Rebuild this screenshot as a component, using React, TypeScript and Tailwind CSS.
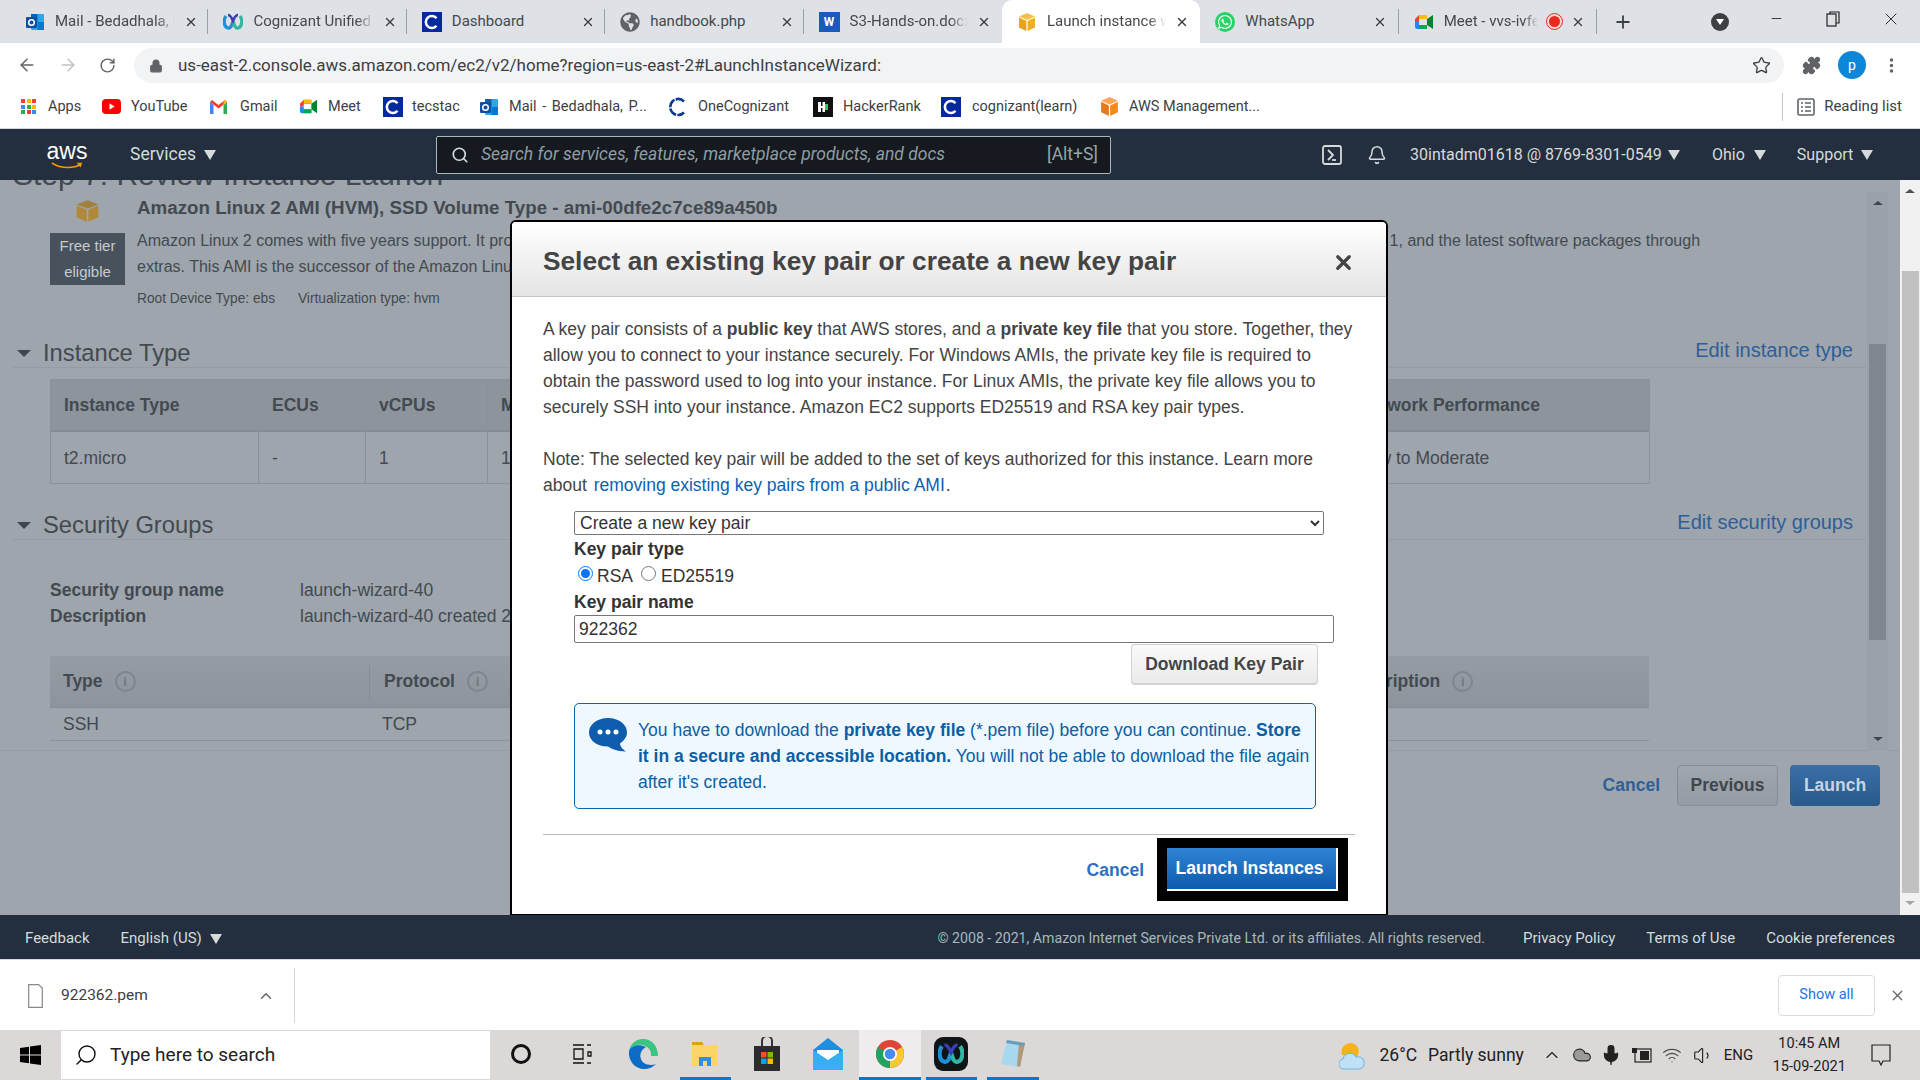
import type { ReactNode } from 'react';
import {
  ArrowLeft, ArrowRight, Bell, ChevronUp, EllipsisVertical, Lock, Mic, Minus, Plus, RotateCw,
  Search, Star, Volume1, X, Puzzle, Wifi, Cloud,
} from 'lucide-react';
import { FaGlobeAmericas, FaWhatsapp } from 'react-icons/fa';

const chromeFont = "font-['Roboto',sans-serif]";

function Outlook({ size = 20 }: { size?: number }) {
  return (
    <svg width={size} height={size} viewBox="0 0 20 20" className="shrink-0">
      <rect x="6" y="2" width="13" height="16" rx="1" fill="#28a8ea" />
      <rect x="6" y="2" width="6.5" height="8" fill="#0364b8" />
      <rect x="12.5" y="10" width="6.5" height="8" fill="#0078d4" />
      <rect x="1" y="5" width="11" height="11" rx="1" fill="#0f4f9e" />
      <circle cx="6.5" cy="10.5" r="2.8" fill="none" stroke="#fff" strokeWidth="1.5" />
    </svg>
  );
}

function CLogo({ size = 20 }: { size?: number }) {
  return (
    <svg width={size} height={size} viewBox="0 0 20 20" className="shrink-0">
      <rect width="20" height="20" fill="#03299b" />
      <path d="M14.5 6.2A6 6 0 1 0 14.5 13.8" fill="none" stroke="#fff" strokeWidth="2.6" />
    </svg>
  );
}

function Webex({ size = 20 }: { size?: number }) {
  return (
    <svg width={size} height={size} viewBox="0 0 20 20" className="shrink-0">
      <path d="M3 4c-3 4-2 11 2 12 3 1 4-4 5-7" fill="none" stroke="#1f8fd6" strokeWidth="3.2" />
      <path d="M17 4c3 4 2 11-2 12-3 1-4-4-5-7" fill="none" stroke="#2fb8a0" strokeWidth="3.2" />
      <path d="M5 3c3 0 4 4 5 6 1-2 2-6 5-6" fill="none" stroke="#3c3fb8" strokeWidth="2.6" />
    </svg>
  );
}

function MeetIcon({ size = 20 }: { size?: number }) {
  return (
    <svg width={size} height={size} viewBox="0 0 20 20" className="shrink-0">
      <path d="M5 3h8v4H5v3H1V7z" fill="#ea4335" />
      <path d="M1 10h4v3h8v4H3a2 2 0 0 1-2-2z" fill="#2684fc" />
      <path d="M13 7v6l6 4V3z" fill="#00832d" />
      <path d="M5 3h8v4H5z" fill="#fbbc04" />
      <path d="M5 13h8v4H5z" fill="#00ac47" />
    </svg>
  );
}

function Cube({ size = 20, top, left, right }: { size?: number; top: string; left: string; right: string }) {
  return (
    <svg width={size} height={size} viewBox="0 0 20 20" className="shrink-0">
      <path d="M10 1l8 3.5L10 8 2 4.5z" fill={top} />
      <path d="M2 5.5L9.4 9v10L2 15.5z" fill={left} />
      <path d="M18 5.5L10.6 9v10l7.4-3.5z" fill={right} />
    </svg>
  );
}

function Tab({ icon, label, fade, active, noDivider, extra, closeMargin = 'mr-[11px]' }: {
  icon: ReactNode; label: string; fade?: boolean; active?: boolean; noDivider?: boolean; extra?: ReactNode; closeMargin?: string;
}) {
  return (
    <div className={`w-[198.4px] h-full shrink-0 flex items-center pl-[15px] ${active ? 'bg-white rounded-t-[10px]' : ''}`}>
      {icon}
      <span className={`ml-[10px] flex-1 min-w-0 overflow-hidden whitespace-nowrap text-[15px] text-[#45484d] ${fade ? '[mask-image:linear-gradient(to_right,black_85%,transparent)]' : ''}`}>
        {label}
      </span>
      {extra}
      <X size={14} strokeWidth={2.4} className={`ml-[9px] shrink-0 text-[#3c4043] ${closeMargin}`} />
      {!noDivider && !active && <span className="h-[25px] w-px bg-[#9aa0a6] shrink-0" />}
    </div>
  );
}

function TabStrip() {
  return (
    <div className={`h-[43px] bg-[#dee1e6] flex items-center pl-[10px] ${chromeFont}`}>
      <Tab icon={<Outlook />} label="Mail - Bedadhala, Prasanna" fade closeMargin="mr-[9px]" />
      <Tab icon={<Webex />} label="Cognizant Unified Portal" fade closeMargin="mr-[9px]" />
      <Tab icon={<CLogo />} label="Dashboard" closeMargin="mr-[9px]" />
      <Tab icon={<FaGlobeAmericas size={20} className="shrink-0 text-[#5f6368]" />} label="handbook.php" closeMargin="mr-[9px]" />
      <Tab
        icon={<span className="w-[21px] h-[20px] shrink-0 bg-[#185abd] text-white text-[12px] font-bold flex items-center justify-center">W</span>}
        label="S3-Hands-on.docx"
        fade
        noDivider
      />
      <Tab icon={<Cube top="#f7c04a" left="#e8a317" right="#f0ae2a" />} label="Launch instance wizard" fade active noDivider />
      <Tab
        icon={
          <span className="w-[20px] h-[20px] shrink-0 rounded-full bg-[#25d366] flex items-center justify-center text-white">
            <FaWhatsapp size={16} />
          </span>
        }
        label="WhatsApp"
      />
      <Tab
        icon={<MeetIcon />}
        label="Meet - vvs-ivfe-xyz"
        fade
        extra={<span className="w-[15px] h-[15px] ml-[9px] shrink-0 rounded-full bg-[#ea2a1e] border-2 border-[#fbd5d2] outline outline-1 outline-[#ea2a1e]" />}
      />
      <Plus size={20} strokeWidth={2.2} className="ml-[16px] text-[#3c4043]" />
      <span className="ml-[78px] w-[18px] h-[18px] rounded-full bg-[#3c4043] flex items-center justify-center">
        <span className="w-0 h-0 border-l-[4px] border-r-[4px] border-t-[6px] border-l-transparent border-r-transparent border-t-white" />
      </span>
      <Minus size={15} strokeWidth={1.4} className="ml-[40px] -mt-[6px] text-[#222]" />
      <svg width="14" height="16" viewBox="0 0 14 16" className="ml-[42px] -mt-[6px] text-[#222]">
        <rect x="1" y="3" width="9" height="12" fill="none" stroke="currentColor" strokeWidth="1.2" />
        <path d="M4 3V1h9v11h-3" fill="none" stroke="currentColor" strokeWidth="1.2" />
      </svg>
      <X size={20} strokeWidth={1.1} className="ml-[41px] -mt-[6px] text-[#222]" />
    </div>
  );
}

function AddressBar() {
  return (
    <div className={`h-[42px] bg-white flex items-start pt-[5px] ${chromeFont}`}>
      <ArrowLeft size={20} strokeWidth={1.8} className="ml-[17px] mt-[7px] text-[#5f6368]" />
      <ArrowRight size={20} strokeWidth={1.8} className="ml-[21px] mt-[7px] text-[#bdc1c6]" />
      <RotateCw size={17} strokeWidth={2} className="ml-[21px] mt-[9px] text-[#5f6368]" />
      <div className="ml-[18px] w-[1650px] h-[35px] rounded-full bg-[#f1f3f4] flex items-center pl-[15px]">
        <Lock size={14} fill="#5f6368" className="text-[#5f6368]" />
        <span className="ml-[15px] text-[17px] text-[#3c4043] whitespace-nowrap">
          us-east-2.console.aws.amazon.com/ec2/v2/home?region=us-east-2#LaunchInstanceWizard:
        </span>
        <Star size={19} strokeWidth={1.7} className="ml-auto mr-[13px] text-[#3c4043]" />
      </div>
      <Puzzle size={19} fill="#5f6368" className="ml-[18px] mt-[8px] text-[#5f6368]" />
      <span className="ml-[17px] mt-[3px] w-[28px] h-[28px] rounded-full bg-[#0d87d8] text-white text-[14px] flex items-center justify-center">p</span>
      <EllipsisVertical size={19} strokeWidth={2.4} className="ml-[16px] mt-[8px] text-[#5f6368]" />
    </div>
  );
}

function AppsIcon() {
  const colors = ['#ea4335', '#fbbc04', '#ea4335', '#4285f4', '#34a853', '#fbbc04', '#34a853', '#ea4335', '#4285f4'];
  return (
    <span className="grid grid-cols-3 gap-[1.5px] w-[15px] shrink-0">
      {colors.map((c, i) => (
        <span key={i} className="w-[4px] h-[4px]" style={{ background: c }} />
      ))}
    </span>
  );
}

const bookmarks: { w: string; gap: string; label: string; icon: ReactNode }[] = [
  { w: 'w-[81px]', gap: 'ml-[12px]', label: 'Apps', icon: <AppsIcon /> },
  {
    w: 'w-[108px]', gap: 'ml-[10px]', label: 'YouTube',
    icon: (
      <svg width="19" height="15" viewBox="0 0 19 15" className="shrink-0">
        <rect width="19" height="15" rx="4" fill="#f00" />
        <path d="M7.5 4.2l5 3.3-5 3.3z" fill="#fff" />
      </svg>
    ),
  },
  {
    w: 'w-[89px]', gap: 'ml-[13px]', label: 'Gmail',
    icon: (
      <svg width="17" height="14" viewBox="0 0 17 14" className="shrink-0">
        <path d="M0 2v12h3.500V5z" fill="#4285f4" />
        <path d="M17 2v12h-3.500V5z" fill="#34a853" />
        <path d="M0 2l8.500 6.500L17 2l-2-2-6.500 5L2 0z" fill="#ea4335" />
        <path d="M13.500 5V2L15 0l2 2z" fill="#fbbc04" />
      </svg>
    ),
  },
  { w: 'w-[84px]', gap: 'ml-[10px]', label: 'Meet', icon: <MeetIcon size={19} /> },
  { w: 'w-[96px]', gap: 'ml-[9px]', label: 'tecstac', icon: <CLogo /> },
  { w: 'w-[189px]', gap: 'ml-[10px] [word-spacing:2px]', label: 'Mail - Bedadhala, P...', icon: <Outlook /> },
  {
    w: 'w-[145px]', gap: 'ml-[10px]', label: 'OneCognizant',
    icon: (
      <svg width="20" height="20" viewBox="0 0 20 20" className="shrink-0">
        <path d="M16 4.500A8 8 0 1 0 16 15.500" fill="none" stroke="#0b3a8f" strokeWidth="2.6" strokeDasharray="9 1.2" />
      </svg>
    ),
  },
  {
    w: 'w-[128px]', gap: 'ml-[10px]', label: 'HackerRank',
    icon: (
      <svg width="20" height="20" viewBox="0 0 20 20" className="shrink-0">
        <rect width="20" height="20" fill="#111" />
        <path d="M5 5h3v4h1.500V5H12v10H9.500v-4H8v4H5z" fill="#fff" />
        <path d="M12 7h3v6h-3z" fill="#2ec866" />
      </svg>
    ),
  },
  { w: 'w-[158px]', gap: 'ml-[11px]', label: 'cognizant(learn)', icon: <CLogo /> },
  { w: 'w-[170px]', gap: 'ml-[9px]', label: 'AWS Management...', icon: <Cube size={21} top="#f8a65a" left="#e8791a" right="#f28a22" /> },
];

function BookmarksBar() {
  return (
    <div className={`h-[44px] bg-white border-b border-[#d5d7da] flex items-center pl-[21px] ${chromeFont}`}>
      {bookmarks.map((b) => (
        <div key={b.label} className={`${b.w} shrink-0 flex items-center`}>
          {b.icon}
          <span className={`${b.gap} text-[14.5px] text-[#3c4043] whitespace-nowrap`}>{b.label}</span>
        </div>
      ))}
      <div className="ml-auto h-[28px] border-l border-[#c4c7c9] flex items-center pl-[14px] pr-[18px]">
        <svg width="18" height="18" viewBox="0 0 18 18" className="shrink-0 text-[#5f6368]">
          <rect x="1" y="1" width="16" height="16" rx="1.5" fill="none" stroke="currentColor" strokeWidth="1.6" />
          <path d="M4 5h2M8 5h6M4 9h2M8 9h6M4 13h2M8 13h6" stroke="currentColor" strokeWidth="1.5" />
        </svg>
        <span className="ml-[9px] text-[15px] text-[#3c4043] whitespace-nowrap">Reading list</span>
      </div>
    </div>
  );
}

function Caret({ className = 'border-t-[#d5dbdb]' }: { className?: string }) {
  return <span className={`inline-block w-0 h-0 border-l-[6px] border-r-[6px] border-t-[10px] border-l-transparent border-r-transparent ${className}`} />;
}

function AwsNav() {
  return (
    <div className={`h-[51px] bg-[#232f3e] flex items-center text-[#d5dbdb] ${chromeFont}`}>
      <div className="w-[436px] shrink-0 flex items-center pl-[46px]">
        <div className="w-[42px] relative h-[30px] flex flex-col items-center">
          <span className="text-[23px] leading-[22px] font-['Liberation_Sans',sans-serif] text-white">aws</span>
          <svg width="42" height="10" viewBox="0 0 42 10">
            <path d="M2 1c10 7 26 8 36 2" fill="none" stroke="#f90" strokeWidth="2" />
            <path d="M33 1l7 0-2 6z" fill="#f90" />
          </svg>
        </div>
        <span className="ml-[42px] text-[17.5px]">Services</span>
        <Caret className="ml-[8px] border-t-[#d5dbdb]" />
      </div>
      <div className="w-[675px] shrink-0 h-[38px] bg-[#16191f] border border-[#aab7b8] rounded-[2px] flex items-center pl-[14px] pr-[12px]">
        <Search size={18} strokeWidth={2.2} className="text-[#d5dbdb]" />
        <span className="ml-[12px] italic text-[17.5px] text-[#8d9ea2] whitespace-nowrap">Search for services, features, marketplace products, and docs</span>
        <span className="ml-auto text-[17.5px] text-[#95a5a6]">[Alt+S]</span>
      </div>
      <svg width="20" height="20" viewBox="0 0 20 20" className="ml-[211px] shrink-0">
        <rect x="1" y="1" width="18" height="18" rx="2" fill="none" stroke="#d5dbdb" strokeWidth="1.8" />
        <path d="M6 5l5 5-5 5" fill="none" stroke="#d5dbdb" strokeWidth="1.8" />
        <path d="M10 15h4" stroke="#d5dbdb" strokeWidth="1.8" />
      </svg>
      <Bell size={20} strokeWidth={1.8} className="ml-[25px] shrink-0" />
      <span className="ml-[23px] w-[249px] text-[16px] whitespace-nowrap">30intadm01618 @ 8769-8301-0549</span>
      <Caret className="ml-[9px] border-t-[#d5dbdb]" />
      <span className="ml-[32px] text-[16px]">Ohio</span>
      <Caret className="ml-[9px] border-t-[#d5dbdb]" />
      <span className="ml-[31px] text-[16px]">Support</span>
      <Caret className="ml-[8px] border-t-[#d5dbdb]" />
    </div>
  );
}

function SectionHeading({ title, edit }: { title: string; edit: string }) {
  return (
    <div className="h-[36px] pt-[7px] border-b border-[#949ba3] flex items-center justify-between mr-[1px] pl-[4px]">
      <div className="flex items-center">
        <span className="w-0 h-0 border-l-[7px] border-r-[7px] border-t-[7px] border-l-transparent border-r-transparent border-t-[#3f464d]" />
        <span className="ml-[12px] text-[23.75px] text-[#434a51] leading-[30px]">{title}</span>
      </div>
      <span className="text-[20px] text-[#2f5f98] mr-[13px] -mt-[6px]">{edit}</span>
    </div>
  );
}

function InfoDot() {
  return (
    <span className="ml-[12px] w-[21px] h-[21px] rounded-full border-2 border-[#7f868d] inline-flex items-center justify-center text-[13px] font-bold text-[#707880] leading-none">
      i
    </span>
  );
}

function BackgroundPage() {
  const instanceCols = [
    { w: 'w-[208px]', head: 'Instance Type', cell: 't2.micro' },
    { w: 'w-[107px]', head: 'ECUs', cell: '-' },
    { w: 'w-[122px]', head: 'vCPUs', cell: '1' },
    { w: 'w-[858px]', head: 'Memory (GiB)', cell: '1' },
    { w: 'w-[303px]', head: 'Network Performance', cell: 'Low to Moderate' },
  ];
  return (
    <div className="flex-1 flex flex-col bg-[#9ea5ac] text-[#434a51] font-['Liberation_Sans',sans-serif]">
      <div className="h-[571px] flex shrink-0 border-b border-[#949ba3]">
        <div className="flex-1 min-w-0 pl-[13px] overflow-hidden">
          <div className="h-[12px] overflow-hidden">
            <h1 className="-mt-[20px] text-[30px] leading-[30px] whitespace-nowrap text-[#434a51]">Step 7: Review Instance Launch</h1>
          </div>
          <div className="h-[140px] flex">
            <div className="w-[124px] shrink-0 pl-[37px]">
              <div className="w-[75px] flex justify-center pt-[7px]">
                <svg width="25" height="24" viewBox="0 0 20 20">
                  <path d="M10 1l9 3.500L10 8 1 4.500z" fill="#a17f3c" />
                  <path d="M1 5.500L9.300 9v10L1 15.500z" fill="#b08a3a" />
                  <path d="M19 5.500L10.700 9v10l8.300-3.500z" fill="#b08a3a" />
                </svg>
              </div>
              <div className="mt-[10px] w-[75px] h-[52px] bg-[#48525c] text-[#c6cbd0] text-[15px] leading-[26px] text-center">
                Free tier<br />eligible
              </div>
            </div>
            <div className="min-w-0">
              <div className="text-[18.75px] font-bold leading-[31px] whitespace-nowrap">Amazon Linux 2 AMI (HVM), SSD Volume Type - ami-00dfe2c7ce89a450b</div>
              <div className="mt-[5px] text-[16px] leading-[26px] whitespace-nowrap">
                Amazon Linux 2 comes with five years support. It provides Linux kernel 4.14 tuned for optimal<span className="ml-[28px]">performance on Amazon EC2, systemd 219, GCC 7.3, Glibc 2.26, Binutils 2.29.1, and the latest software packages through</span><br />
                extras. This AMI is the successor of the Amazon Linux AMI.
              </div>
              <div className="mt-[9px] text-[13.75px] leading-[20px]">
                Root Device Type: ebs <span className="ml-[19px]">Virtualization type: hvm</span>
              </div>
            </div>
          </div>
          <SectionHeading title="Instance Type" edit="Edit instance type" />
          <div className="ml-[37px] mt-[11px] w-[1600px] h-[105px] border border-[#8a9199] flex">
            {instanceCols.map((c, i) => (
              <div key={c.head} className={`${c.w} shrink-0 flex flex-col ${i < instanceCols.length - 1 ? 'border-r border-[#8a9199]' : ''}`}>
                <div className="h-[52px] pt-[1px] bg-[#8d949b] border-b-2 border-[#858c93] flex items-center pl-[13px] text-[17.5px] font-bold whitespace-nowrap">{c.head}</div>
                <div className="flex-1 pt-[2px] flex items-center pl-[13px] text-[17.5px] whitespace-nowrap">{c.cell}</div>
              </div>
            ))}
          </div>
          <div className="mt-[20px]">
            <SectionHeading title="Security Groups" edit="Edit security groups" />
          </div>
          <div className="ml-[37px] mt-[37px] text-[17.5px] leading-[26px] grid grid-cols-[250px_1fr] w-[1600px]">
            <span className="font-bold">Security group name</span>
            <span>launch-wizard-40</span>
            <span className="font-bold">Description</span>
            <span className="whitespace-nowrap">launch-wizard-40 created 2021-09-15</span>
          </div>
          <div className="ml-[37px] mt-[27px] w-[1599px]">
            <div className="h-[52px] bg-gradient-to-b from-[#959ca3] to-[#8d949b] border-b border-[#858c93] flex items-center text-[17.5px] font-bold">
              <div className="w-[320px] shrink-0 h-[34px] border-r border-[#858c93] pl-[13px] flex items-center">Type<InfoDot /></div>
              <div className="w-[961px] shrink-0 pl-[14px] flex items-center">Protocol<InfoDot /></div>
              <div className="flex-1 pl-[13px] flex items-center">Description<InfoDot /></div>
            </div>
            <div className="h-[33px] border-b border-[#8a9199] flex items-center text-[17.5px]">
              <div className="w-[320px] shrink-0 pl-[13px]">SSH</div>
              <div className="pl-[12px]">TCP</div>
            </div>
          </div>
        </div>
        <div className="w-[21px] mr-[12px] mt-[12px] h-[559px] bg-[#9aa1a8] shrink-0 flex flex-col items-center">
          <span className="mt-[9px] w-0 h-0 border-l-[5px] border-r-[5px] border-b-[4px] border-l-transparent border-r-transparent border-b-[#3f464d]" />
          <div className="mt-[139px] w-[17px] h-[296px] bg-[#7f868d]" />
          <span className="mt-[97px] w-0 h-0 border-l-[5px] border-r-[5px] border-t-[4px] border-l-transparent border-r-transparent border-t-[#3f464d]" />
        </div>
      </div>
      <div className="flex items-center justify-end mt-[14px] pr-[20px] font-bold text-[17.5px]">
        <span className="text-[#2f5f98]">Cancel</span>
        <span className="ml-[17px] w-[101px] h-[41px] rounded-[4px] border border-[#858c93] bg-gradient-to-b from-[#a0a6ad] to-[#959ba2] text-[#3f464d] flex items-center justify-center">Previous</span>
        <span className="ml-[12px] w-[90px] h-[41px] rounded-[4px] bg-gradient-to-b from-[#3a6fa6] to-[#285a8d] text-[#c9d4df] flex items-center justify-center">Launch</span>
      </div>
    </div>
  );
}

function OuterScrollbar() {
  return (
    <div className="w-[20px] shrink-0 bg-[#f1f1f1] flex flex-col items-center">
      <span className="mt-[9px] w-0 h-0 border-l-[5px] border-r-[5px] border-b-[4px] border-l-transparent border-r-transparent border-b-[#505050]" />
      <div className="mt-[78px] w-[17px] h-[622px] bg-[#c1c1c1]" />
      <span className="mt-[8px] w-0 h-0 border-l-[5px] border-r-[5px] border-t-[4px] border-l-transparent border-r-transparent border-t-[#a3a3a3]" />
    </div>
  );
}

function KeyPairModal() {
  return (
    <div className="absolute left-[510px] top-[220px] w-[878px] h-[695px] bg-white border-x-2 border-t-2 border-b border-black rounded-t-[6px] font-['Liberation_Sans',sans-serif] text-[17.5px] text-[#444]">
      <div className="h-[75px] rounded-t-[4px] bg-gradient-to-b from-white to-[#e4e4e4] border-b border-[#c8c8c8] flex items-center justify-between pl-[31px] pr-[31px] pt-[6px]">
        <h2 className="text-[26.25px] font-bold text-[#444] whitespace-nowrap">Select an existing key pair or create a new key pair</h2>
        <X size={23} strokeWidth={3.4} className="text-[#444]" />
      </div>
      <div className="pt-[19px] px-[31px]">
        <p className="leading-[26px] whitespace-nowrap">
          A key pair consists of a <b>public key</b> that AWS stores, and a <b>private key file</b> that you store. Together, they<br />
          allow you to connect to your instance securely. For Windows AMIs, the private key file is required to<br />
          obtain the password used to log into your instance. For Linux AMIs, the private key file allows you to<br />
          securely SSH into your instance. Amazon EC2 supports ED25519 and RSA key pair types.
        </p>
        <p className="mt-[26px] leading-[26px] whitespace-nowrap">
          Note: The selected key pair will be added to the set of keys authorized for this instance. Learn more<br />
          about <span className="ml-[2px] text-[#0b5fb3]">removing existing key pairs from a public AMI</span><span className="ml-[1px]">.</span>
        </p>
        <div className="ml-[31px] mt-[13px] text-[#333]">
          <select className="block w-[750px] h-[24px] border border-[#767676] rounded-[2px] pl-[1px] text-[17.5px] text-[#333] bg-white">
            <option>Create a new key pair</option>
          </select>
          <div className="mt-[2px] h-[24px] leading-[24px] font-bold">Key pair type</div>
          <div className="h-[28px] pt-[2px] flex items-center">
            <input type="radio" name="keytype" defaultChecked className="ml-[4px] mr-[4px] -mt-[5px] w-[15px] h-[15px]" />
            RSA
            <input type="radio" name="keytype" className="ml-[8px] mr-[5px] -mt-[5px] w-[15px] h-[15px]" />
            ED25519
          </div>
          <div className="mt-[1px] h-[24px] leading-[24px] font-bold">Key pair name</div>
          <input
            value="922362"
            readOnly
            className="block mt-[1px] w-[760px] h-[28px] border border-[#767676] rounded-[2px] px-[4px] text-[17.5px] text-[#333] bg-white"
          />
          <div className="flex pl-[557px] mt-[1px]">
            <span className="w-[187px] h-[41px] rounded-[4px] border border-[#d2d2d2] border-b-2 bg-gradient-to-b from-[#fafafa] to-[#eaeaea] font-bold text-[#444] flex items-center justify-center whitespace-nowrap">
              Download Key Pair
            </span>
          </div>
          <div className="mt-[18px] w-[742px] h-[106px] rounded-[5px] border border-[#0b63a8] bg-[#f0f8ff] flex text-[#0b5fa5] pl-[14px]">
            <svg width="38" height="34" viewBox="0 0 38 34" className="mt-[14px] shrink-0">
              <path d="M19 0C8 0 0 6.500 0 14.500c0 8 8 14 19 14 3 2 9 5 18 5-3-2-6-5-6-8 4-3 7-6.500 7-11C38 6.500 30 0 19 0z" fill="#0f5cad" />
              <circle cx="11" cy="14" r="2.500" fill="#fff" />
              <circle cx="19" cy="14" r="2.500" fill="#fff" />
              <circle cx="27" cy="14" r="2.500" fill="#fff" />
            </svg>
            <p className="ml-[11px] mt-[13px] leading-[26px] whitespace-nowrap">
              You have to download the <b>private key file</b> (*.pem file) before you can continue. <b>Store</b><br />
              <b>it in a secure and accessible location.</b> You will not be able to download the file again<br />
              after it's created.
            </p>
          </div>
        </div>
        <div className="mt-[25px] border-t border-[#bbb] w-[812px]" />
        <div className="mt-[3px] flex items-center justify-end w-[805px]">
          <span className="font-bold text-[#2f6fc0] mt-[2px]">Cancel</span>
          <div className="ml-[13px] w-[191px] h-[63px] bg-black flex items-center justify-center">
            <span className="w-[171px] h-[43px] pr-[4px] bg-gradient-to-b from-[#2f84d6] to-[#0b5aad] border-r-2 border-b-2 border-white text-white font-bold flex items-center justify-center">
              Launch Instances
            </span>
          </div>
        </div>
      </div>
    </div>
  );
}

function AwsFooter() {
  return (
    <div className={`h-[45px] pt-[3px] bg-[#232f3e] border-b border-[#d8dadd] flex items-center text-[15px] text-[#d5dbdb] ${chromeFont}`}>
      <span className="ml-[25px]">Feedback</span>
      <span className="ml-[31px]">English (US)</span>
      <Caret className="ml-[8px] border-t-[#d5dbdb]" />
      <span className="ml-auto text-[14.15px] text-[#aab7b8] whitespace-nowrap">© 2008 - 2021, Amazon Internet Services Private Ltd. or its affiliates. All rights reserved.</span>
      <span className="ml-[38px]">Privacy Policy</span>
      <span className="ml-[31px]">Terms of Use</span>
      <span className="ml-[31px] mr-[25px]">Cookie preferences</span>
    </div>
  );
}

function DownloadBar() {
  return (
    <div className={`h-[70px] bg-white flex items-center ${chromeFont}`}>
      <div className="w-[295px] h-[55px] pt-[1px] border-r border-[#d5d7da] flex items-center pl-[28px]">
        <svg width="15" height="24" viewBox="0 0 15 24" className="shrink-0">
          <path d="M.7.7h10l3.600 3.600v19H.7z" fill="#fff" stroke="#888" strokeWidth="1.200" />
        </svg>
        <span className="ml-[18px] text-[15.5px] text-[#3c4043]">922362.pem</span>
        <ChevronUp size={18} strokeWidth={1.8} className="ml-[109px] text-[#5f6368]" />
      </div>
      <span className="ml-auto w-[97px] h-[41px] rounded-[4px] border border-[#dadce0] text-[#1a73e8] text-[14.5px] flex items-center justify-center">Show all</span>
      <X size={17} strokeWidth={1.7} className="ml-[14px] mr-[14px] text-[#5f6368]" />
    </div>
  );
}

function TaskItem({ children, line, active }: { children: ReactNode; line?: boolean; active?: boolean }) {
  return (
    <div className={`w-[61.5px] h-full shrink-0 flex flex-col ${active ? 'bg-[#eeecec]' : ''}`}>
      <div className="flex-1 flex items-center justify-center">{children}</div>
      <div className={`h-[3px] ${line ? 'bg-[#0078d4]' : ''} ${active ? '' : 'mx-[5px]'}`} />
    </div>
  );
}

function Taskbar() {
  return (
    <div className={`h-[50px] bg-[#dbd8d7] flex items-center ${chromeFont}`}>
      <div className="w-[61px] shrink-0 flex justify-center">
        <svg width="21" height="20" viewBox="0 0 21 20">
          <path d="M0 3l9-1.300V9.500H0zM10 1.500L21 0v9.500H10zM0 10.500h9v7.800L0 17zM10 10.500h11V20l-11-1.500z" fill="#000" />
        </svg>
      </div>
      <div className="w-[429px] h-[48px] shrink-0 bg-white flex items-center pl-[13px]">
        <Search size={24} strokeWidth={1.4} className="text-[#111] -scale-x-100" />
        <span className="ml-[12px] text-[19px] text-[#222] whitespace-nowrap">Type here to search</span>
      </div>
      <TaskItem><span className="w-[20px] h-[20px] rounded-full border-[3px] border-[#111]" /></TaskItem>
      <TaskItem>
        <svg width="20" height="20" viewBox="0 0 20 20" fill="none" stroke="#111" strokeWidth="1.300">
          <path d="M1 1h11M1 19h11M2 5h9v10H2zM15 1h4M15 19h4M16 8h3v4h-3z" />
        </svg>
      </TaskItem>
      <TaskItem>
        <svg width="32" height="32" viewBox="0 0 32 32">
          <path d="M30 18C30 8 24 1 15 1 7 1 2 7 1 13c3-5 8-7 13-6 6 1 10 6 9 11z" fill="#39c481" />
          <path d="M1 13C0 23 7 31 16 31c5 0 9-2 12-5-5 2-13 1-15-5-2-5 1-10 5-12C10 5 3 8 1 13z" fill="#0c6cc4" />
        </svg>
      </TaskItem>
      <TaskItem line>
        <svg width="28" height="28" viewBox="0 0 28 28">
          <path d="M1 2h10l2 3H1z" fill="#e0a010" />
          <path d="M1 5h26v21H1z" fill="#fcd56a" />
          <path d="M8 26v-9h12v9h-4v-5h-4v5z" fill="#2f8fe0" />
        </svg>
      </TaskItem>
      <TaskItem>
        <svg width="28" height="34" viewBox="0 0 28 34">
          <path d="M9 9V4a5 5 0 0 1 10 0v5" fill="none" stroke="#333" strokeWidth="2" />
          <rect x="1" y="9" width="26" height="25" fill="#2c2c2c" />
          <rect x="8" y="15" width="5.500" height="5.500" fill="#f25022" />
          <rect x="14.500" y="15" width="5.500" height="5.500" fill="#7fba00" />
          <rect x="8" y="21.500" width="5.500" height="5.500" fill="#00a4ef" />
          <rect x="14.500" y="21.500" width="5.500" height="5.500" fill="#ffb900" />
        </svg>
      </TaskItem>
      <TaskItem>
        <svg width="30" height="32" viewBox="0 0 30 32">
          <path d="M0 12L15 0l15 12v20H0z" fill="#1c8fe0" />
          <path d="M4 12h22v8L15 26 4 20z" fill="#fff" />
          <path d="M0 12l15 10 15-10v20H0z" fill="#38b0f0" />
        </svg>
      </TaskItem>
      <TaskItem line active>
        <svg width="30" height="30" viewBox="0 0 30 30">
          <circle cx="15" cy="15" r="14" fill="#de4437" />
          <path d="M15 15L27.100 8A14 14 0 0 1 15 29z" fill="#fcc934" />
          <path d="M15 15L15 29A14 14 0 0 1 2.900 8z" fill="#1ea362" />
          <circle cx="15" cy="15" r="7" fill="#fff" />
          <circle cx="15" cy="15" r="5.300" fill="#4a8af4" />
        </svg>
      </TaskItem>
      <TaskItem line>
        <span className="w-[34px] h-[34px] rounded-[9px] bg-[#0f1417] flex items-center justify-center"><Webex size={26} /></span>
      </TaskItem>
      <TaskItem line>
        <svg width="28" height="32" viewBox="0 0 28 32">
          <path d="M8 2l18 3-5 24L2 26z" fill="#a8d8ee" />
          <path d="M20 5l6 0-5 24-3-1z" fill="#b09878" />
          <path d="M8 2l18 3-1 3L7 5z" fill="#6c9db8" />
        </svg>
      </TaskItem>
      <svg width="28" height="32" viewBox="0 0 28 32" className="ml-[295px] shrink-0">
        <path d="M3 16a9 9 0 0 1 14-10 9 9 0 0 1 0 13z" fill="#f5b21c" />
        <path d="M6 30a5 5 0 0 1-2-10 7 7 0 0 1 13-2 6 6 0 0 1 4 12z" fill="#bfe0f5" stroke="#6bb6e8" strokeWidth="1" />
      </svg>
      <span className="ml-[13px] text-[17.5px] text-[#222] whitespace-nowrap">26°C<span className="ml-[11px]">Partly sunny</span></span>
      <ChevronUp size={20} strokeWidth={1.4} className="ml-[18px] text-[#222]" />
      <Cloud size={20} fill="#9b9b9b" strokeWidth={1.4} className="ml-[10px] text-[#222]" />
      <Mic size={22} fill="#222" strokeWidth={1.6} className="ml-[8px] text-[#222]" />
      <svg width="20" height="16" viewBox="0 0 20 16" className="ml-[10px] text-[#222]">
        <rect x="3" y="2" width="16" height="13" fill="none" stroke="currentColor" strokeWidth="1.200" />
        <rect x="8" y="4" width="9" height="9" fill="currentColor" />
        <rect x="0" y="1" width="5" height="5" fill="currentColor" />
      </svg>
      <Wifi size={20} strokeWidth={1.3} className="ml-[10px] text-[#444]" />
      <Volume1 size={21} strokeWidth={1.3} className="ml-[11px] text-[#222]" />
      <span className="ml-[10px] text-[15px] text-[#222]">ENG</span>
      <div className="ml-[17px] w-[78px] text-center text-[14.5px] leading-[23px] text-[#222] whitespace-nowrap">
        10:45 AM<br />15-09-2021
      </div>
      <svg width="20" height="22" viewBox="0 0 20 22" className="ml-[23px] text-[#222]">
        <path d="M1 1h18v16h-7l-2 4-2-4H1z" fill="none" stroke="currentColor" strokeWidth="1.200" />
      </svg>
    </div>
  );
}

export default function App() {
  return (
    <div className="relative w-[1920px] h-[1080px] overflow-hidden flex flex-col bg-white">
      <TabStrip />
      <AddressBar />
      <BookmarksBar />
      <AwsNav />
      <div className="h-[735px] flex shrink-0">
        <BackgroundPage />
        <OuterScrollbar />
      </div>
      <AwsFooter />
      <DownloadBar />
      <Taskbar />
      <KeyPairModal />
    </div>
  );
}
